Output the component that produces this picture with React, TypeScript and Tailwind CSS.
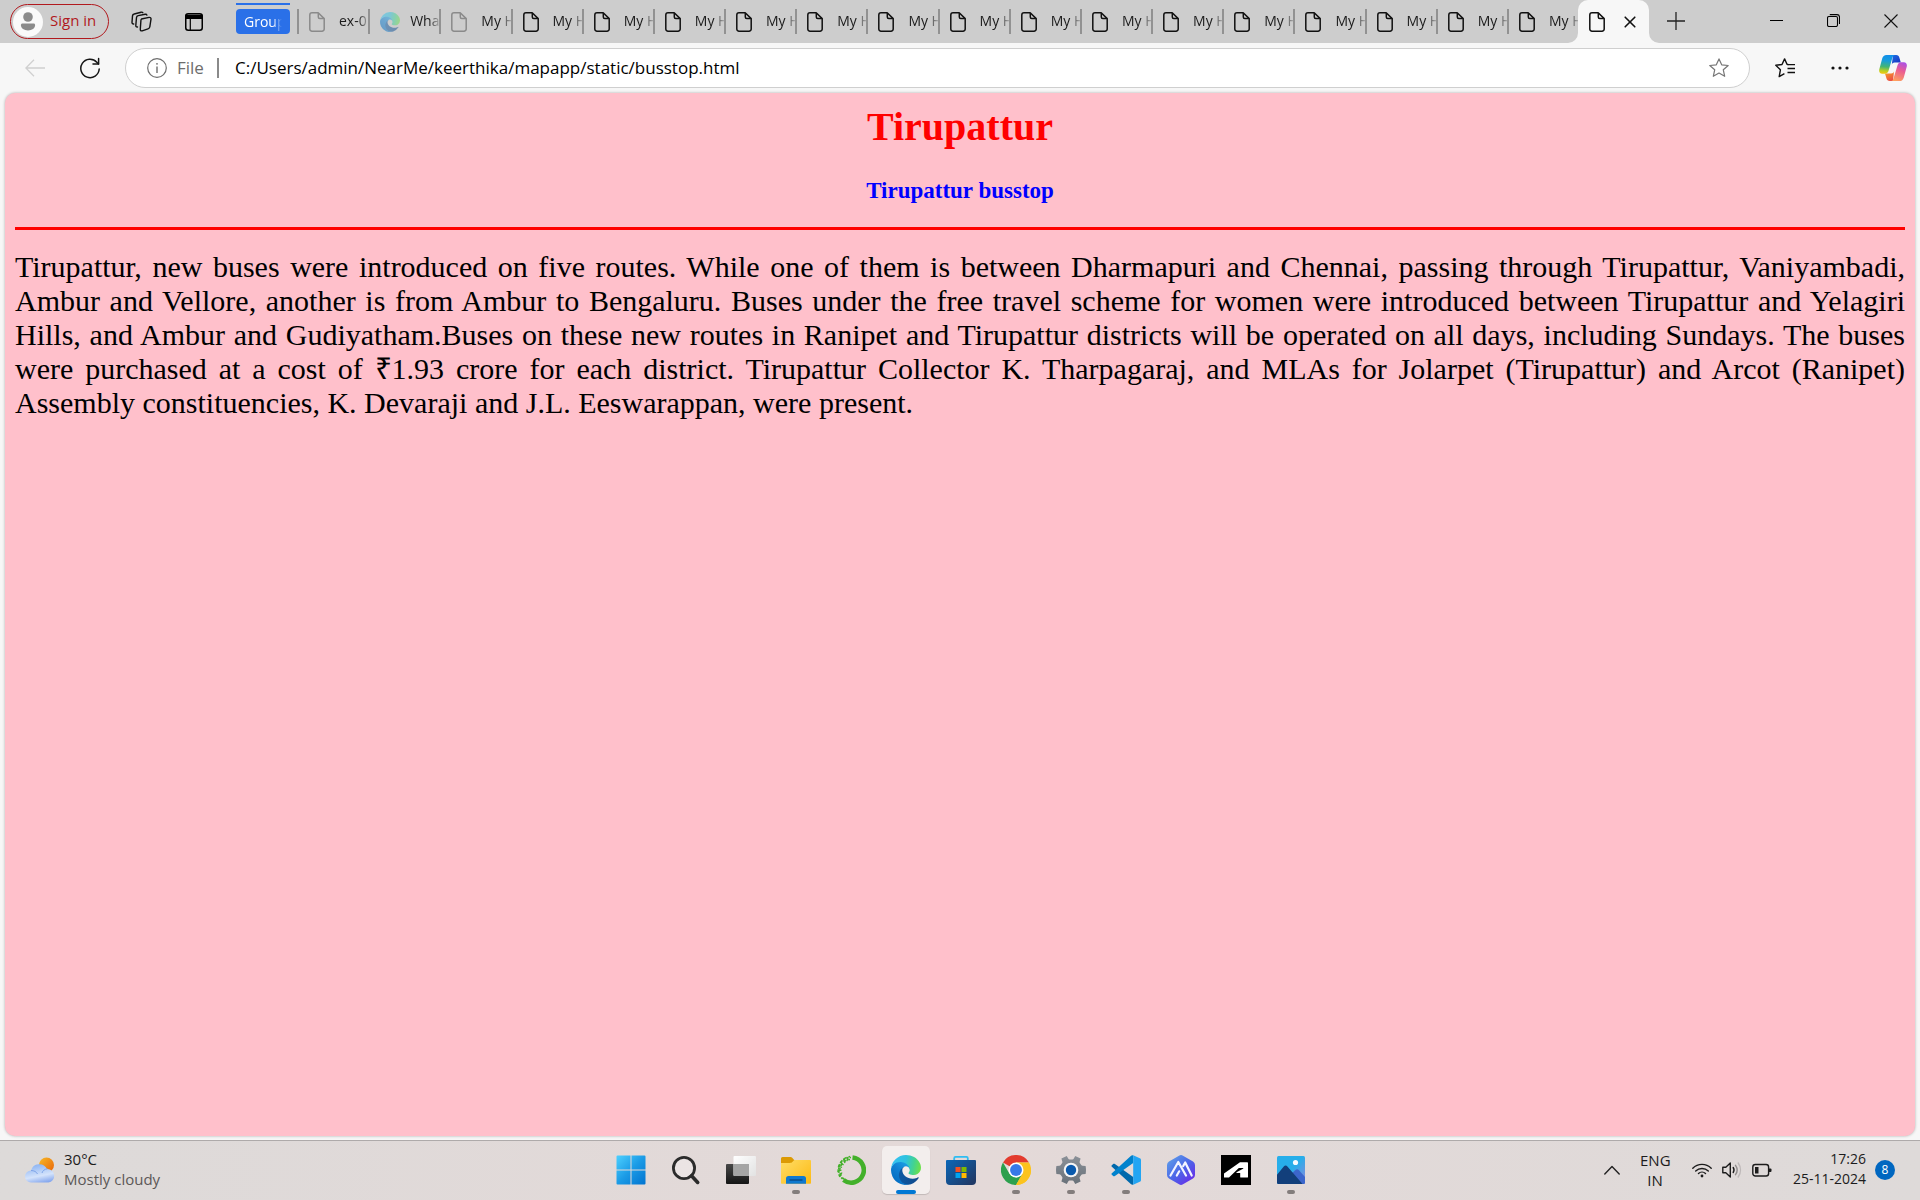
import React from "react";

const UI_FONT = "font-['Open_Sans','Noto_Sans',sans-serif]";

function PageIcon({ faded = false }: { faded?: boolean }) {
  return (
    <svg width="16" height="20" viewBox="0 0 16 20" fill="none" stroke={faded ? "#8a8a8a" : "#111"} strokeWidth="1.5" strokeLinejoin="round" className="shrink-0">
      <path d="M3 .8h6.2L15.2 6.600V17a2.200 2.200 0 0 1-2.200 2.200H3A2.200 2.200 0 0 1 .8 17V3A2.200 2.200 0 0 1 3 .8Z" />
      <path d="M9.300 .9v4.200c0 .9.6 1.500 1.500 1.500h4.300" />
    </svg>
  );
}

function EdgeLogo({ size, id, faded = false }: { size: number; id: string; faded?: boolean }) {
  return (
    <svg width={size} height={size} viewBox="0 0 256 256" opacity={faded ? 0.5 : 1} className="shrink-0">
      <defs>
        <linearGradient id={id + "a"} x1="60" y1="177" x2="241" y2="177" gradientUnits="userSpaceOnUse">
          <stop stopColor="#0c59a4" />
          <stop offset="1" stopColor="#114a8b" />
        </linearGradient>
        <linearGradient id={id + "b"} x1="155" y1="95" x2="42" y2="220" gradientUnits="userSpaceOnUse">
          <stop stopColor="#1b9de2" />
          <stop offset=".5" stopColor="#0f7fd2" />
          <stop offset="1" stopColor="#0670c4" />
        </linearGradient>
        <linearGradient id={id + "c"} x1="10" y1="60" x2="250" y2="110" gradientUnits="userSpaceOnUse">
          <stop stopColor="#35c1f1" />
          <stop offset=".45" stopColor="#2fc2df" />
          <stop offset=".75" stopColor="#43d390" />
          <stop offset="1" stopColor="#6be04b" />
        </linearGradient>
      </defs>
      <path fill={`url(#${id}a)`} d="M231 190.500c-3.400 1.800-6.900 3.300-10.500 4.700a101.900 101.900 0 0 1-35.900 6.400c-47.300 0-88.500-32.500-88.500-74.300a31.500 31.500 0 0 1 16.400-27.300c-42.800 1.800-53.800 46.400-53.800 72.500 0 74 68.100 81.400 82.800 81.400 7.900 0 19.800-2.300 27-4.600l1.300-.4a128.300 128.300 0 0 0 66.600-52.800 4 4 0 0 0-5.400-5.600Z" />
      <path fill={`url(#${id}b)`} d="M105.700 241.400a79.200 79.200 0 0 1-22.700-21.300 80.700 80.700 0 0 1 29.500-120c3.200-1.500 8.500-4.100 15.600-4a32.400 32.400 0 0 1 25.700 13 31.900 31.900 0 0 1 6.300 18.700c0-.2 24.500-79.600-80-79.600-43.900 0-80 41.700-80 78.200a130.200 130.200 0 0 0 12.100 56 128 128 0 0 0 156.400 67 75.500 75.500 0 0 1-62.800-8Z" />
      <path fill={`url(#${id}c)`} d="M152.300 148.900c-.9 1-3.400 2.500-3.400 5.600 0 2.600 1.700 5.200 4.800 7.300 14.300 10 41.400 8.600 41.500 8.600a59.600 59.600 0 0 0 30.300-8.300 61.400 61.400 0 0 0 30.400-52.900c.3-22.400-8-37.300-11.300-43.900C223.500 23.900 177.700 0 128 0A128 128 0 0 0 0 126.200c.5-36.500 36.800-66 80-66 3.500 0 23.500.3 42 10 16.300 8.600 24.900 18.900 30.800 29.200 6.200 10.700 7.300 24.100 7.300 29.500 0 5.300-2.700 13.300-7.800 20Z" />
    </svg>
  );
}

type Tab = { title: string; kind: "page" | "faded" | "edge" };
const tabs: Tab[] = [
  { title: "ex-01", kind: "faded" },
  { title: "What is", kind: "edge" },
  { title: "My Home", kind: "faded" },
  ...Array.from({ length: 15 }, (): Tab => ({ title: "My Home", kind: "page" })),
];

const windowButton = "flex h-[43px] w-[57px] items-center justify-center pb-[2px]";

function TabStrip() {
  return (
    <header className="flex h-[43px] items-center bg-[#cdcdcd] text-[#1b1b1b]">
      <div className="flex h-full w-[297px] shrink-0 items-center pl-[10px]">
        <button className="flex h-[35px] w-[99px] items-center gap-[7px] rounded-full border border-[#b1191e] pl-[2px] text-[15px] text-[#b1191e]">
          <svg width="30" height="30" viewBox="0 0 30 30" className="shrink-0">
            <circle cx="15" cy="15" r="15" fill="#fafafa" />
            <circle cx="15" cy="10" r="4.800" fill="#8b8b8b" />
            <path d="M9.500 16.500h11c1 0 1.600.7 1.600 1.600 0 3.400-3.200 5.400-7.100 5.400s-7.100-2-7.100-5.400c0-.9.7-1.600 1.600-1.600Z" fill="#8b8b8b" />
          </svg>
          <span className="whitespace-nowrap pb-[2px]">Sign in</span>
        </button>
        <button aria-label="Workspaces" className="ml-[22px]">
          <svg width="21" height="21" viewBox="0 0 21 21" fill="none" stroke="#111" strokeWidth="1.400" strokeLinejoin="round" strokeLinecap="round">
            <path d="m10.500 8 7.500-1.600c1.300-.2 2.200.6 2 1.800l-1.200 7.600c-.2 1-.8 1.700-1.800 2l-5.800 2c-1.200.4-2-.3-1.900-1.500l.6-8.700c0-.8.4-1.400.6-1.600Z" />
            <path d="M6.500 16c-1 .2-1.800-.4-1.700-1.500l.7-8c.1-1 .7-1.700 1.700-1.900l7-1.400c.8-.1 1.500.2 1.700.9" />
            <path d="M2.700 13C1.600 13.100.9 12.400 1 11.300l.5-6.400c.1-1 .7-1.700 1.700-1.900l6.900-1.800c.8-.2 1.400 0 1.700.5" />
          </svg>
        </button>
        <button aria-label="Tab actions" className="ml-[33px]">
          <svg width="18" height="18" viewBox="0 0 18 18" fill="none" stroke="#000" strokeWidth="1.500">
            <rect x=".75" y=".75" width="16.500" height="16.500" rx="2.500" />
            <path d="M1 2.500h16v2.800H1z" fill="#000" />
            <path d="M5.300 5v12" strokeWidth="1.200" />
          </svg>
        </button>
        <div className="ml-[33px] flex h-full flex-col pt-[3px]">
          <div className="h-[2px] w-[54px] bg-[#2a70e8]" />
          <button className="mt-1 h-[25px] w-[54px] overflow-hidden rounded-[4px] bg-[#2a70e8] pl-2 pr-2 text-left text-sm leading-6 text-white">
            <span className="block overflow-hidden whitespace-nowrap [mask-image:linear-gradient(to_right,#000_75%,transparent)]">Group</span>
          </button>
        </div>
      </div>
      <nav aria-label="Tabs" className="flex h-full min-w-0 flex-1 items-center">
        {tabs.map((t, i) => (
          <button key={i} className="flex h-[25px] min-w-0 flex-1 basis-0 items-center border-l-2 border-[#929292] pl-[10px] text-sm leading-6">
            {t.kind === "edge" ? <EdgeLogo size={20} id="tab" faded /> : <PageIcon faded={t.kind === "faded"} />}
            <span className={`min-w-0 flex-1 overflow-hidden whitespace-nowrap pb-px text-left [mask-image:linear-gradient(to_right,#000_65%,rgba(0,0,0,0.2))] ${t.kind === "edge" ? "ml-[10px]" : "ml-[14px]"}`}>
              {t.title}
            </span>
          </button>
        ))}
      </nav>
      <div className="relative flex h-full w-[71px] shrink-0 items-center justify-between rounded-t-[10px] bg-[#f7f7f7] pl-[11px] pr-[13px]">
        <svg className="absolute bottom-0 -left-[10px]" width="10" height="10" viewBox="0 0 10 10"><path d="M10 0v10H0A10 10 0 0 0 10 0Z" fill="#f7f7f7" /></svg>
        <svg className="absolute bottom-0 -right-[10px]" width="10" height="10" viewBox="0 0 10 10"><path d="M0 0v10h10A10 10 0 0 1 0 0Z" fill="#f7f7f7" /></svg>
        <PageIcon />
        <button aria-label="Close tab">
          <svg width="12" height="12" viewBox="0 0 12 12" stroke="#111" strokeWidth="1.600" strokeLinecap="round"><path d="m1.200 1.200 9.600 9.600m0-9.600-9.600 9.600" /></svg>
        </button>
      </div>
      <button aria-label="New tab" className="flex w-[54px] shrink-0 justify-center pb-[2px]">
        <svg width="18" height="18" viewBox="0 0 18 18" stroke="#222" strokeWidth="1.300"><path d="M9 0v18M0 9h18" /></svg>
      </button>
      <div className="ml-[45px] mr-px flex shrink-0">
        <button aria-label="Minimize" className={windowButton}>
          <svg width="13" height="13" viewBox="0 0 13 13" stroke="#000"><path d="M0 6.500h13" /></svg>
        </button>
        <button aria-label="Restore" className={windowButton}>
          <svg width="13" height="13" viewBox="0 0 13 13" fill="none" stroke="#000" strokeWidth="1.100">
            <rect x=".5" y="2.500" width="10" height="10" rx="1.500" />
            <path d="M2.800.6H10A2.500 2.500 0 0 1 12.500 3v7" />
          </svg>
        </button>
        <button aria-label="Close" className={windowButton}>
          <svg width="14" height="14" viewBox="0 0 14 14" stroke="#111" strokeWidth="1.100"><path d="m.5.5 13 13m0-13-13 13" /></svg>
        </button>
      </div>
    </header>
  );
}

const toolButton = "flex h-10 w-10 shrink-0 items-center justify-center";

function Toolbar() {
  return (
    <div className="flex h-[50px] items-center gap-[15px] bg-[#f7f7f7] pl-[15px] pr-[9px]">
      <button aria-label="Back" className={toolButton}>
        <svg width="20" height="18" viewBox="0 0 20 18" fill="none" stroke="#d0d0d0" strokeWidth="1.300"><path d="M20 9H1M9 .8.900 9l8.100 8.200" /></svg>
      </button>
      <button aria-label="Refresh" className={toolButton}>
        <svg width="20" height="22" viewBox="0 0 20 22" fill="none" stroke="#161616" strokeWidth="1.500" strokeLinecap="round" strokeLinejoin="round">
          <path d="M19.200 12A9.200 9.200 0 1 1 16.800 5.200L18.500 7" />
          <path d="M18.600 1.500V7H13" />
        </svg>
      </button>
      <form className="flex h-10 min-w-0 flex-1 items-center rounded-full border border-[#cfcfcf] bg-white pl-[21px] pr-5" onSubmit={(e) => e.preventDefault()}>
        <svg width="20" height="20" viewBox="0 0 20 20" fill="none" stroke="#6e6e6e" strokeWidth="1.200" className="shrink-0">
          <circle cx="10" cy="10" r="9.300" />
          <path d="M10 8.500v6.500" strokeWidth="1.400" />
          <circle cx="10" cy="5.800" r=".9" fill="#6e6e6e" stroke="none" />
        </svg>
        <span className="ml-[10px] w-10 text-[17px] leading-6 text-[#6d6d6d]">File</span>
        <span className="h-5 w-[2px] bg-[#8a8a8a]" />
        <input aria-label="Address" defaultValue="C:/Users/admin/NearMe/keerthika/mapapp/static/busstop.html" className="ml-4 min-w-0 flex-1 bg-transparent text-[17px] leading-6 text-black outline-none" />
        <button type="button" aria-label="Add to favorites">
          <svg width="20" height="20" viewBox="0 0 20 20" fill="none" stroke="#767676" strokeWidth="1.200" strokeLinejoin="round">
            <path d="m10 .9 2.700 5.900 6.500.7-4.900 4.300 1.400 6.500L10 15.100l-5.700 3.200 1.400-6.500L.8 7.500l6.500-.7L10 .9Z" />
          </svg>
        </button>
      </form>
      <button aria-label="Favorites" className={toolButton}>
        <svg width="20" height="20" viewBox="0 0 20 20" fill="none" stroke="#111" strokeWidth="1.400" strokeLinejoin="round">
          <path d="M13.500 6.600 12 6.300 9.600.9 7 6.500l-6.200.8 4.600 4.500-1.200 6.800 5.200-3" />
          <path d="M12.500 6.600H20M12.500 10.500H20M12.500 14.500H20" />
        </svg>
      </button>
      <button aria-label="Settings and more" className={toolButton}>
        <svg width="18" height="4" viewBox="0 0 18 4" fill="#111"><circle cx="2" cy="2" r="1.600" /><circle cx="9" cy="2" r="1.600" /><circle cx="16" cy="2" r="1.600" /></svg>
      </button>
      <button aria-label="Copilot" className="flex h-10 w-9 shrink-0 items-center justify-center">
        <svg width="28" height="26" viewBox="0 0 28 26">
          <defs>
            <linearGradient id="cpA" x1="8" y1="0" x2="6" y2="19" gradientUnits="userSpaceOnUse"><stop stopColor="#118eea" /><stop offset=".3" stopColor="#179ddc" /><stop offset=".62" stopColor="#43b574" /><stop offset=".85" stopColor="#bfcf22" /><stop offset="1" stopColor="#f6c70c" /></linearGradient>
            <linearGradient id="cpB" x1="24" y1="6" x2="16" y2="26" gradientUnits="userSpaceOnUse"><stop stopColor="#a24ff0" /><stop offset=".45" stopColor="#ea5c93" /><stop offset="1" stopColor="#ffa45c" /></linearGradient>
            <linearGradient id="cpC" x1="14" y1="0" x2="20" y2="8" gradientUnits="userSpaceOnUse"><stop stopColor="#1c6ae0" /><stop offset="1" stopColor="#1b38c4" /></linearGradient>
            <linearGradient id="cpD" x1="8" y1="18" x2="12" y2="26" gradientUnits="userSpaceOnUse"><stop stopColor="#f5942b" /><stop offset="1" stopColor="#eb4b46" /></linearGradient>
          </defs>
          <path d="M14 0h3.200c1.900 0 2.700 1 3.200 2.700l1.400 4.800h-6.200c-1.500 0-2.400.7-2.800 2Z" fill="url(#cpC)" />
          <path d="M14 26h-3.200c-1.900 0-2.900-1-3.400-2.700l-1.400-4.800h6.200c1.500 0 2.400-.7 2.800-2Z" fill="url(#cpD)" />
          <path d="M7.500 0h8.300c-1.500.4-2 1.500-2.500 3.100l-3.600 12.100c-.6 2-1.600 3.600-4 3.600H3.200C.6 18.800-.3 16.500.3 14.200L3.200 3.600C3.900 1.200 5.300 0 7.500 0Z" fill="url(#cpA)" />
          <path d="M20.500 26h-8.300c1.500-.4 2-1.500 2.500-3.100l3.600-12c.6-2 1.600-3.700 4-3.700h2.500c2.600 0 3.500 2.300 2.900 4.600l-2.900 10.600c-.7 2.400-2.100 3.600-4.300 3.600Z" fill="url(#cpB)" />
        </svg>
      </button>
    </div>
  );
}

function WebPage() {
  return (
    <div className="flex flex-1 flex-col border-b border-[#aeaaaa] bg-[#f7f7f7] px-[5px] pb-1">
      <main className="flex-1 rounded-[10px] bg-[#ffc0cb] p-[10px] font-['Liberation_Serif',serif] shadow-[0_0_3px_rgba(0,0,0,0.3)]">
        <h1 className="text-center text-[40px] font-bold leading-[48px] text-[#ff0000]">Tirupattur</h1>
        <h2 className="mt-[27px] text-center text-[23px] font-bold leading-[26px] text-[#0000ff]">Tirupattur busstop</h2>
        <hr className="mt-[23px] border-0 border-t-[3px] border-[#ff0000]" />
        <p className="mt-5 text-justify text-[30px] leading-[34px] text-black">
          Tirupattur, new buses were introduced on five routes. While one of them is between Dharmapuri and Chennai, passing through Tirupattur, Vaniyambadi, Ambur and Vellore, another is from Ambur to Bengaluru. Buses under the free travel scheme for women were introduced between Tirupattur and Yelagiri Hills, and Ambur and Gudiyatham.Buses on these new routes in Ranipet and Tirupattur districts will be operated on all days, including Sundays. The buses were purchased at a cost of ₹1.93 crore for each district. Tirupattur Collector K. Tharpagaraj, and MLAs for Jolarpet (Tirupattur) and Arcot (Ranipet) Assembly constituencies, K. Devaraji and J.L. Eeswarappan, were present.
        </p>
      </main>
    </div>
  );
}

const StartIcon = (
  <svg width="30" height="30" viewBox="0 0 30 30">
    <defs><linearGradient id="st" x1="0" y1="0" x2="30" y2="30" gradientUnits="userSpaceOnUse"><stop stopColor="#4fd2ff" /><stop offset=".5" stopColor="#1b9be6" /><stop offset="1" stopColor="#0072cf" /></linearGradient></defs>
    <path fill="url(#st)" d="M1.500.5h13v14H.5v-13a1 1 0 0 1 1-1ZM15.500.5h13a1 1 0 0 1 1 1v13h-14ZM.5 15.500h14v14h-13a1 1 0 0 1-1-1ZM15.500 15.500h14v13a1 1 0 0 1-1 1h-13Z" />
  </svg>
);
const SearchIcon = (
  <svg width="30" height="30" viewBox="0 0 30 30" fill="none" stroke="#2b2b2b">
    <circle cx="13" cy="13" r="10.600" fill="#fff" fillOpacity=".3" strokeWidth="2.800" />
    <path d="m20.500 20.800 6.200 6.600" strokeWidth="3.600" strokeLinecap="round" />
  </svg>
);
const TaskViewIcon = (
  <svg width="30" height="30" viewBox="0 0 30 30">
    <defs>
      <linearGradient id="tv1" x1="0" y1="8" x2="0" y2="29" gradientUnits="userSpaceOnUse"><stop stopColor="#4a4a4a" /><stop offset="1" stopColor="#151515" /></linearGradient>
      <linearGradient id="tv2" x1="8" y1="0" x2="30" y2="21" gradientUnits="userSpaceOnUse"><stop stopColor="#fff" /><stop offset="1" stopColor="#e2e2e2" /></linearGradient>
    </defs>
    <rect x="0" y="9" width="23" height="20" rx="1" fill="url(#tv1)" />
    <rect x="7.500" y="1" width="22.500" height="20" rx="1" fill="url(#tv2)" />
    <path d="M7.500 9H23v12H8.500a1 1 0 0 1-1-1Z" fill="#a5a5a5" />
  </svg>
);
const FolderIcon = (
  <svg width="30" height="30" viewBox="0 0 30 30">
    <defs><linearGradient id="fo" x1="4" y1="4" x2="26" y2="29" gradientUnits="userSpaceOnUse"><stop stopColor="#ffdb62" /><stop offset="1" stopColor="#fcbc19" /></linearGradient></defs>
    <path d="M0 3.500A1.500 1.500 0 0 1 1.500 2h8c.8 0 1.200.2 1.700.7L14 6v4H0Z" fill="#dc9a04" />
    <path d="M0 8h9c1 0 1.600-.2 2.300-.9L12.500 5.800c.5-.5 1-.8 1.800-.8H29a1 1 0 0 1 1 1v22a.7.700 0 0 1-.7.7H.7A.7.700 0 0 1 0 28Z" fill="url(#fo)" />
    <path d="M5 28.700V23.500A2.500 2.500 0 0 1 7.500 21h15a2.500 2.500 0 0 1 2.500 2.500v5.200Z" fill="#1079cf" />
    <path d="M9 25h12" stroke="#0a4c8c" strokeWidth="1.300" strokeLinecap="round" />
  </svg>
);
const AnacondaIcon = (
  <svg width="30" height="30" viewBox="0 0 30 30" fill="none" stroke="#43b02a">
    <path d="M16.500 2.500A12.600 12.600 0 1 1 7.500 25" strokeWidth="4.600" />
    <path d="M6.500 24A12.600 12.600 0 0 1 15 2.400" strokeWidth="1.500" strokeDasharray="2 1.500" />
    <path d="M4 22A13.800 13.800 0 0 1 14 1.500M8.500 24.500A11 11 0 0 1 14 4.500" strokeWidth="1.500" strokeDasharray="3 2" />
    <path d="m2 11 4 1.500m-4.500 4 4-1.500M4 7l3.500 3M7.500 3.500 9 8m-5 13 2-3.500m6-15.500-1 4" strokeWidth="1.300" />
  </svg>
);
const StoreIcon = (
  <svg width="30" height="30" viewBox="0 0 30 30">
    <defs><linearGradient id="sto" x1="0" y1="5" x2="24" y2="30" gradientUnits="userSpaceOnUse"><stop stopColor="#0a67b8" /><stop offset="1" stopColor="#203a67" /></linearGradient></defs>
    <path d="M8.200 6V3.200c0-.8.5-1.300 1.300-1.300h11c.8 0 1.300.5 1.300 1.300V6" fill="none" stroke="#2fbdf2" strokeWidth="1.800" />
    <path d="M1 5h28a1 1 0 0 1 1 1v20a4 4 0 0 1-4 4H4a4 4 0 0 1-4-4V6a1 1 0 0 1 1-1Z" fill="url(#sto)" />
    <path d="M9.500 12h5v5h-5z" fill="#f25022" /><path d="M15.500 12h5v5h-5z" fill="#7fba00" /><path d="M9.500 18h5v5h-5z" fill="#00a4ef" /><path d="M15.500 18h5v5h-5z" fill="#ffb900" />
  </svg>
);
const ChromeIcon = (
  <svg width="30" height="30" viewBox="0 0 48 48">
    <path d="M24 24 3.200 12A24 24 0 0 1 44.800 12H24Z" fill="#e33b2e" />
    <path d="M24 12h20.800A24 24 0 0 1 24 48l10.400-18Z" fill="#fcc31e" />
    <path d="M3.200 12 13.600 30 24 36l4.500-1L24 48A24 24 0 0 1 3.200 12Z" fill="#2da04e" />
    <path d="m34.400 30-10.400 18-3-1 7-13Z" fill="#2da04e" />
    <path d="M34.400 30 24 48c14 0 24-11 24-24Z" fill="#fcc31e" />
    <circle cx="24" cy="24" r="12" fill="#fff" /><circle cx="24" cy="24" r="9.500" fill="#3879e8" />
  </svg>
);
const SettingsIcon = (
  <svg width="30" height="30" viewBox="0 0 30 30">
    <defs><linearGradient id="se" x1="0" y1="0" x2="0" y2="30" gradientUnits="userSpaceOnUse"><stop stopColor="#8c9299" /><stop offset="1" stopColor="#687078" /></linearGradient></defs>
    <path d="M5.400 3.600 10.800 1l1.400 2.600c.3.600.8.900 1.500.9h2.600c.7 0 1.200-.3 1.500-.9L19.200 1l5.400 2.600-.9 3c-.2.600-.1 1.100.3 1.600l1.200 1.700c.4.500.8.800 1.400.8l3 .3c.5 2.700.5 5.300 0 8l-3 .3c-.6 0-1 .3-1.400.8L24 21.800c-.4.500-.5 1-.3 1.600l.9 3-5.400 2.600-1.400-2.600c-.3-.6-.8-.9-1.500-.9h-2.600c-.7 0-1.200.3-1.500.9L10.800 29l-5.400-2.600.9-3c.2-.6.1-1.100-.3-1.600l-1.200-1.700c-.4-.5-.8-.8-1.400-.8l-3-.3c-.5-2.700-.5-5.300 0-8l3-.3c.6 0 1-.3 1.400-.8L6 8.200c.4-.5.5-1 .3-1.600Z" fill="url(#se)" />
    <circle cx="15" cy="15" r="7.300" fill="#f5f5f5" /><circle cx="15" cy="15" r="5.200" fill="#095aad" />
  </svg>
);
const CodeIcon = (
  <svg width="30" height="30" viewBox="0 0 100 100">
    <path fill="#0069ac" d="M2 35 7 30c2-1.200 4-1.200 6 0l61 43v26c-3 1-6 0-8-2L2 38c-1-1-1-2 0-3Z" />
    <path fill="#0082cd" d="M2 62 66 3c2-2 5-3 8-2v26L13 70c-2 1.200-4 1.200-6 0l-5-5c-1-1-1-2 0-3Z" />
    <path fill="#23a5f3" d="m74 1 22 10c3 1.300 4 3 4 6v66c0 3-1 4.700-4 6L74 99Z" />
  </svg>
);
const HexIcon = (
  <svg width="30" height="30" viewBox="0 0 30 30">
    <defs><linearGradient id="hx" x1="2" y1="4" x2="26" y2="28" gradientUnits="userSpaceOnUse"><stop stopColor="#5d9be8" /><stop offset=".5" stopColor="#4b66e8" /><stop offset="1" stopColor="#6a2be8" /></linearGradient></defs>
    <path d="M13 .7a4 4 0 0 1 4 0L27 6.500a4 4 0 0 1 2 3.400v10.200a4 4 0 0 1-2 3.400l-10 5.800a4 4 0 0 1-4 0L3 23.500a4 4 0 0 1-2-3.400V9.900a4 4 0 0 1 2-3.400Z" fill="url(#hx)" />
    <path d="m4.500 20.500 7.800-13.500 7.700 13.500M10.800 20.500l2.400-4.200M17.200 11l2-3.500 6.500 13" fill="none" stroke="#f3f5ff" strokeWidth="2.200" strokeLinecap="round" strokeLinejoin="round" />
  </svg>
);
const AutodeskIcon = (
  <svg width="30" height="30" viewBox="0 0 30 30">
    <path d="M0 0h30v30H0Z" fill="#000" />
    <path d="m3 18.500 16-11.300h7.300c.4 0 .7.300.7.700v14c0 .4-.3.700-.7.700h-6.400a.7.700 0 0 1-.7-.7v-4h-3.500c-.4 0-.5-.4-.2-.6l6.500-3.500c.5-.3.300-.9-.2-.9h-4L8 22.600H3.400a.4.400 0 0 1-.4-.4Z" fill="#fff" />
  </svg>
);
const PhotosIcon = (
  <svg width="30" height="30" viewBox="0 0 30 30">
    <defs>
      <linearGradient id="ph" x1="0" y1="0" x2="30" y2="28" gradientUnits="userSpaceOnUse"><stop offset=".5" stopColor="#27aeea" /><stop offset="1" stopColor="#8f86dd" /></linearGradient>
      <clipPath id="phc"><rect x="1" y="1" width="28" height="28" rx="1.500" /></clipPath>
    </defs>
    <g clipPath="url(#phc)">
      <path d="M1 1h28v28H1z" fill="url(#ph)" />
      <path d="m14 20 5.500-5c1-.9 2.300-.9 3.300.1L30 23v7H16Z" fill="#3c66cc" />
      <path d="m0 21 7.800-9.500c1-1.200 2.600-1.200 3.600 0L27 29.500H0Z" fill="#123f7b" />
    </g>
    <circle cx="19.500" cy="7.500" r="2.600" fill="#f8fbff" />
  </svg>
);

const apps: { name: string; icon: React.ReactNode; state: "idle" | "open" | "active" }[] = [
  { name: "Start", icon: StartIcon, state: "idle" },
  { name: "Search", icon: SearchIcon, state: "idle" },
  { name: "Task view", icon: TaskViewIcon, state: "idle" },
  { name: "File Explorer", icon: FolderIcon, state: "open" },
  { name: "Anaconda Navigator", icon: AnacondaIcon, state: "idle" },
  { name: "Microsoft Edge", icon: <EdgeLogo size={30} id="task" />, state: "active" },
  { name: "Microsoft Store", icon: StoreIcon, state: "idle" },
  { name: "Google Chrome", icon: ChromeIcon, state: "open" },
  { name: "Settings", icon: SettingsIcon, state: "open" },
  { name: "Visual Studio Code", icon: CodeIcon, state: "open" },
  { name: "Android tools", icon: HexIcon, state: "idle" },
  { name: "Autodesk", icon: AutodeskIcon, state: "idle" },
  { name: "Photos", icon: PhotosIcon, state: "open" },
];

function Taskbar() {
  return (
    <footer className="grid h-[59px] grid-cols-[1fr_auto_1fr] items-center bg-linear-to-r from-[#dddad9] via-[#e4d9d8] to-[#dedad9] pb-px text-[15px] leading-5 text-[#1c1c1c]">
      <button className="flex items-center gap-[9px] pl-[25px] text-left">
        <svg width="30" height="26" viewBox="0 0 30 26">
          <defs>
            <linearGradient id="sun" x1="15" y1="2" x2="28" y2="14" gradientUnits="userSpaceOnUse"><stop stopColor="#f6b324" /><stop offset="1" stopColor="#ea6a0a" /></linearGradient>
            <linearGradient id="cl" x1="12" y1="6" x2="16" y2="26" gradientUnits="userSpaceOnUse"><stop stopColor="#86b0f2" /><stop offset=".65" stopColor="#d4e3fb" /><stop offset="1" stopColor="#88a9ee" /></linearGradient>
          </defs>
          <circle cx="21.500" cy="8" r="7.500" fill="url(#sun)" />
          <path d="M6 25.500A6 6 0 0 1 6 13.500a8.600 8.600 0 0 1 16-1.500 6.800 6.800 0 0 1 1.500 13.500Z" fill="url(#cl)" />
          <path d="M6 13.500c3 0 5.500 1.300 6.500 3.500M22.500 11.800c-3 .3-5 2-5.500 4.200" fill="none" stroke="#7fa5e8" strokeWidth="1" />
        </svg>
        <span className="pb-[3px]">
          <span className="block">30°C</span>
          <span className="block text-[#5c5857]">Mostly cloudy</span>
        </span>
      </button>
      <nav aria-label="Taskbar" className="flex gap-[7px] pl-[2px]">
        {apps.map((a) => (
          <button
            key={a.name}
            aria-label={a.name}
            className={`relative flex h-12 w-12 items-center justify-center rounded-[5px] ${a.state === "active" ? "bg-[#f3eeed] shadow-[0_1px_1px_rgba(0,0,0,0.15)]" : ""}`}
          >
            {a.icon}
            {a.state === "open" && <span className="absolute bottom-0 left-5 h-1 w-2 rounded-full bg-[#837d7c]" />}
            {a.state === "active" && <span className="absolute bottom-0 left-[14px] h-1 w-5 rounded-full bg-[#0078d4]" />}
          </button>
        ))}
      </nav>
      <div className="flex items-center justify-end pr-[25px]">
        <button aria-label="Show hidden icons">
          <svg width="16" height="10" viewBox="0 0 16 10" fill="none" stroke="#222" strokeWidth="1.400" strokeLinecap="round" strokeLinejoin="round"><path d="m.8 9 7.200-7.500L15.200 9" /></svg>
        </button>
        <button className="ml-5 w-[30px] pb-px text-center">
          <span className="block">ENG</span>
          <span className="block">IN</span>
        </button>
        <button aria-label="Network, volume and battery" className="ml-[22px] flex gap-[10px]">
          <svg width="20" height="20" viewBox="0 0 20 20" fill="none" stroke="#1c1c1c" strokeWidth="1.400" strokeLinecap="round">
            <path d="M.8 8.200a13 13 0 0 1 18.400 0M3.700 11a9 9 0 0 1 12.600 0M6.500 13.600a5 5 0 0 1 7 0" />
            <circle cx="10" cy="16" r="1.400" fill="#1c1c1c" stroke="none" />
          </svg>
          <svg width="20" height="20" viewBox="0 0 20 20" fill="none" stroke="#1c1c1c" strokeWidth="1.400" strokeLinecap="round" strokeLinejoin="round">
            <path d="M.8 7.300v5.400h3L8.300 17V3L3.800 7.300Z" />
            <path d="M11.200 7.500c1 1.500 1 3.500 0 5" />
            <path d="M13.500 5.300c2 2.800 2 6.600 0 9.400" stroke="#8f8b8b" />
            <path d="M16.200 3c3 4.200 3 9.800 0 14" stroke="#bdb8b8" />
          </svg>
          <svg width="20" height="20" viewBox="0 0 20 20" fill="none" stroke="#1c1c1c" strokeWidth="1.400">
            <rect x=".8" y="4.500" width="15.800" height="11.500" rx="2.500" />
            <path d="M3 7h3.500v6.500H3z" fill="#1c1c1c" stroke="none" />
            <path d="M17 8.500h1.500q1 0 1 1v1.500q0 1-1 1H17z" fill="#1c1c1c" stroke="none" />
          </svg>
        </button>
        <button className="ml-4 w-[78px] whitespace-nowrap pb-[3px] text-right text-sm leading-5">
          <span className="block">17:26</span>
          <span className="block">25-11-2024</span>
        </button>
        <span className="ml-[9px] flex h-5 w-5 items-center justify-center rounded-full bg-[#0067c0] text-xs text-white">8</span>
      </div>
    </footer>
  );
}

export default function App() {
  return (
    <div className={`flex min-h-screen flex-col ${UI_FONT}`}>
      <TabStrip />
      <Toolbar />
      <WebPage />
      <Taskbar />
    </div>
  );
}
